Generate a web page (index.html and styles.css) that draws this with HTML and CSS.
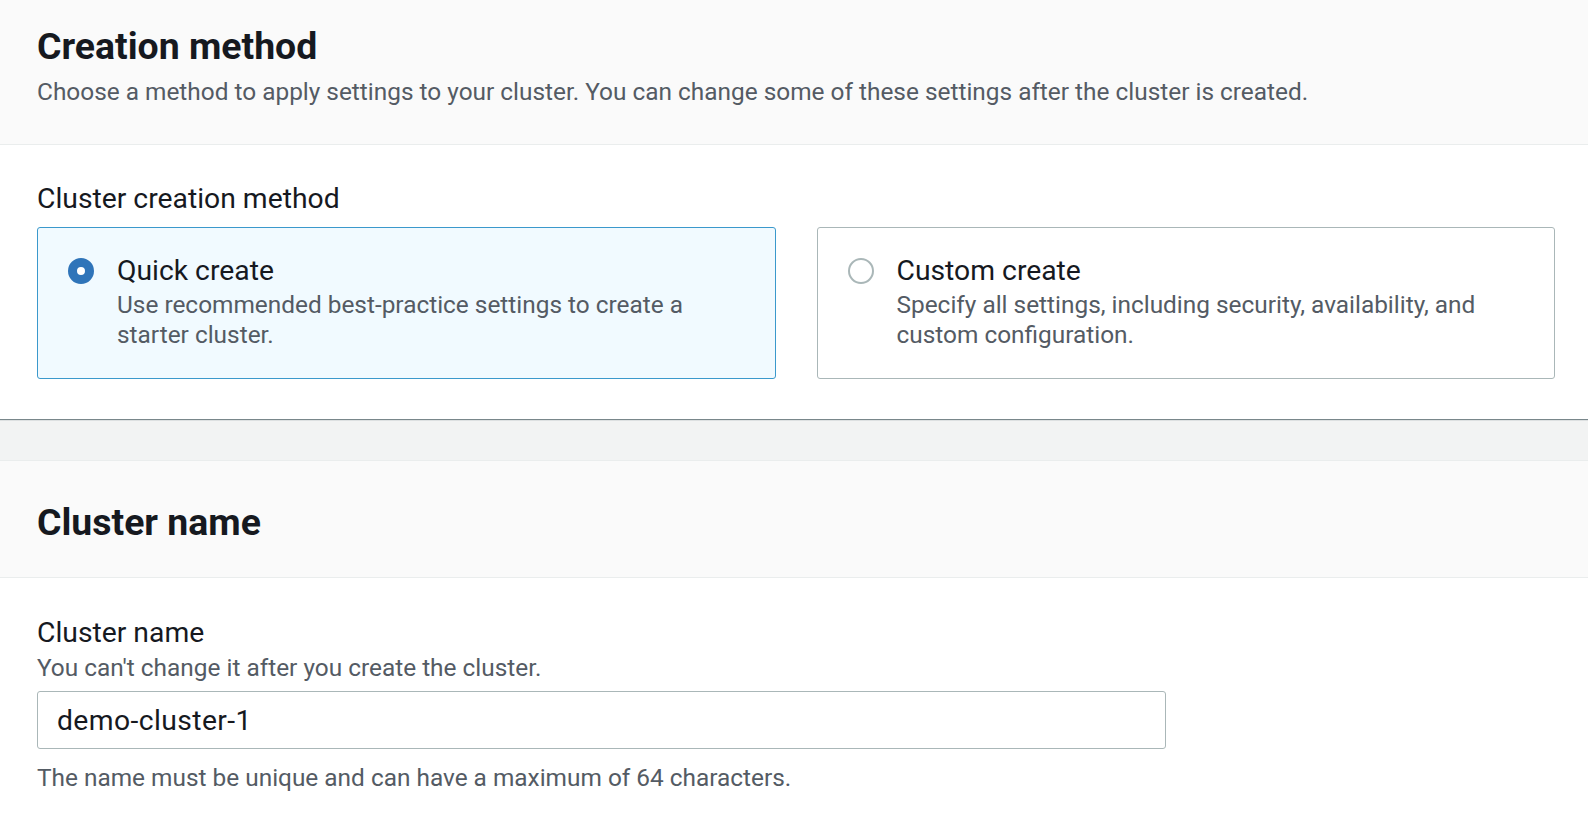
FILE: index.html
```html
<!DOCTYPE html>
<html lang="en">
<head>
<meta charset="utf-8">
<title>Create cluster</title>
<link rel="stylesheet" href="styles.css">
</head>
<body>
<main class="page">
  <section class="container container--first">
    <header class="container-header container-header--intro">
      <h2 class="container-title">Creation method</h2>
      <p class="container-desc">Choose a method to apply settings to your cluster. You can change some of these settings after the cluster is created.</p>
    </header>
    <div class="container-body container-body--method">
      <div class="field-label">Cluster creation method</div>
      <div class="tiles">
        <label class="tile tile--selected">
          <span class="radio-wrap"><span class="radio radio--checked"></span></span>
          <span class="tile-text">
            <span class="tile-title">Quick create</span>
            <span class="tile-desc">Use recommended best-practice settings to create a starter cluster.</span>
          </span>
        </label>
        <label class="tile">
          <span class="radio-wrap"><span class="radio"></span></span>
          <span class="tile-text">
            <span class="tile-title">Custom create</span>
            <span class="tile-desc">Specify all settings, including security, availability, and custom configuration.</span>
          </span>
        </label>
      </div>
    </div>
  </section>

  <div class="gap-band"></div>

  <section class="container container--second">
    <header class="container-header container-header--plain">
      <h2 class="container-title">Cluster name</h2>
    </header>
    <div class="container-body container-body--name">
      <div class="field-label">Cluster name</div>
      <div class="field-desc">You can't change it after you create the cluster.</div>
      <div class="input">demo-cluster-1</div>
      <div class="field-hint">The name must be unique and can have a maximum of 64 characters.</div>
    </div>
  </section>
</main>
</body>
</html>
```
FILE: styles.css
```css
html, body {
  margin: 0;
  padding: 0;
  background: #ffffff;
  overflow: hidden;
}

body {
  font-family: Roboto, "Noto Sans", sans-serif;
  color: #16191f;
}

.page {
  display: flex;
  flex-direction: column;
  min-height: 100vh;
}

.container {
  background: #ffffff;
}

.container--first {
  box-shadow: 0 1px 1px 0 rgba(0, 28, 36, 0.5);
  position: relative;
  z-index: 1;
}

.container--second {
  border-top: 1px solid #eaeded;
  flex: 1;
}

.container-header {
  background: #fafafa;
  border-bottom: 1px solid #eaeded;
  padding-left: 37px;
  padding-right: 33px;
}

.container-header--intro {
  padding-top: 24px;
  padding-bottom: 37px;
}

.container-header--plain {
  padding-top: 39px;
  padding-bottom: 33px;
}

.container-title {
  margin: 0;
  font-size: 37.4px;
  line-height: 44px;
  font-weight: 700;
  color: #16191f;
}

.container-desc {
  margin: 9px 0 0;
  font-size: 24.4px;
  line-height: 30px;
  color: #545b64;
}

.container-body {
  padding-left: 37px;
  padding-right: 33px;
}

.container-body--method {
  padding-top: 37px;
  padding-bottom: 40px;
}

.container-body--name {
  padding-top: 38px;
  padding-bottom: 10px;
}

.field-label {
  font-size: 28.3px;
  line-height: 34px;
  color: #16191f;
}

.tiles {
  margin-top: 11px;
  display: grid;
  grid-template-columns: 1fr 1fr;
  column-gap: 41px;
}

.tile {
  display: flex;
  gap: 23px;
  height: 152px;
  box-sizing: border-box;
  padding: 26px 28px 0 30px;
  border: 1px solid #aab7b8;
  border-radius: 3px;
  background: #ffffff;
}

.tile--selected {
  border-color: #3b99cc;
  background: #f1faff;
}

.radio-wrap {
  flex: none;
  height: 34px;
  display: flex;
  align-items: center;
}

.radio {
  display: block;
  width: 26px;
  height: 26px;
  box-sizing: border-box;
  border-radius: 50%;
  border: 2px solid #aab7b8;
  background: #ffffff;
}

.radio--checked {
  border: 9px solid #2f74b9;
  background: #ffffff;
}

.tile-text {
  display: flex;
  flex-direction: column;
}

.tile-title {
  font-size: 28.3px;
  line-height: 34px;
  color: #16191f;
}

.tile-desc {
  margin-top: 2px;
  font-size: 24.4px;
  line-height: 30px;
  color: #545b64;
}

.field-desc {
  margin-top: 3px;
  font-size: 24.4px;
  line-height: 30px;
  color: #545b64;
}

.input {
  margin-top: 8px;
  width: 1129px;
  height: 58px;
  box-sizing: border-box;
  border: 1px solid #aab7b8;
  border-radius: 3px;
  padding-left: 19px;
  display: flex;
  align-items: center;
  font-size: 28.3px;
  letter-spacing: 0.4px;
  color: #16191f;
}

.field-hint {
  margin-top: 14px;
  font-size: 24.4px;
  line-height: 30px;
  color: #545b64;
}

.gap-band {
  height: 41px;
  background: #f2f3f3;
}
```
